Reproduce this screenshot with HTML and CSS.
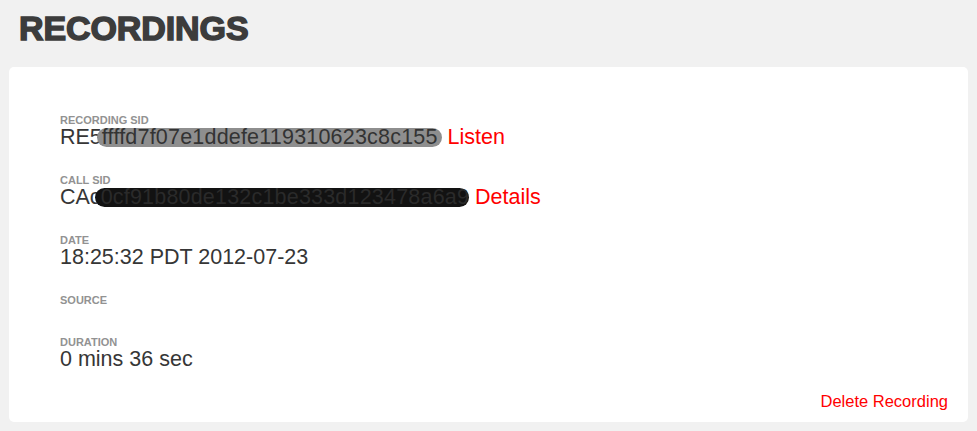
FILE: index.html
```html
<!DOCTYPE html>
<html>
<head>
<meta charset="utf-8">
<link rel="stylesheet" href="styles.css">
</head>
<body>
<h1 class="title">RECORDINGS</h1>
<section class="card">
  <dl class="fields">
    <div class="field">
      <dt class="label">Recording SID</dt>
      <dd class="value">RE5<span class="mark mark-gray">ffffd7f07e1ddefe119310623c8c155</span> <a class="link" href="#">Listen</a></dd>
    </div>
    <div class="field">
      <dt class="label">Call SID</dt>
      <dd class="value">CAc<span class="mark mark-black">0cf91b80de132c1be333d123478a6a9</span> <a class="link" href="#">Details</a></dd>
    </div>
    <div class="field">
      <dt class="label">Date</dt>
      <dd class="value">18:25:32 PDT 2012-07-23</dd>
    </div>
    <div class="field">
      <dt class="label">Source</dt>
      <dd class="value value-empty"></dd>
    </div>
    <div class="field">
      <dt class="label">Duration</dt>
      <dd class="value">0 mins 36 sec</dd>
    </div>
  </dl>
  <div class="actions">
    <a class="link link-small" href="#">Delete Recording</a>
  </div>
</section>
</body>
</html>
```

FILE: styles.css
```css
html, body {
  margin: 0;
  padding: 0;
}

body {
  background: #f1f1f1;
  font-family: "Liberation Sans", Arial, Helvetica, sans-serif;
  color: #363636;
  padding: 8px 9px 0 9px;
  width: 959px;
}

.title {
  margin: 0 0 19px 10px;
  font-size: 34px;
  line-height: 40px;
  font-weight: bold;
  color: #3c3c3c;
  -webkit-text-stroke: 1.5px #3c3c3c;
  letter-spacing: -0.1px;
}

.card {
  background: #fff;
  border-radius: 5px;
  padding: 48px 20px 11px 51px;
}

.fields {
  margin: 0;
  display: flex;
  flex-direction: column;
  gap: 27px;
}

.field {
  display: flex;
  flex-direction: column;
}

.label {
  font-size: 11px;
  line-height: 11px;
  font-weight: bold;
  text-transform: uppercase;
  color: #929292;
}

.value {
  margin: 0;
  font-size: 21.5px;
  line-height: 22px;
  color: #363636;
  white-space: nowrap;
}

.value-empty {
  height: 4px;
}

.mark {
  display: inline-block;
  height: 19px;
  line-height: 19px;
  vertical-align: baseline;
  border-radius: 10px;
  letter-spacing: 0.2px;
}

.mark-gray {
  background: #8e8e8e;
  color: #333;
  margin-left: -5px;
  padding: 0 4px 0 5px;
}

.mark-black {
  background: #121212;
  color: #2a2a2a;
  margin-left: -6px;
  padding: 0 0 0 6px;
}

.link {
  color: #ff0000;
  text-decoration: none;
}

.actions {
  display: flex;
  justify-content: flex-end;
  margin-top: 21px;
}

.link-small {
  font-size: 16.5px;
  line-height: 20px;
}
```
